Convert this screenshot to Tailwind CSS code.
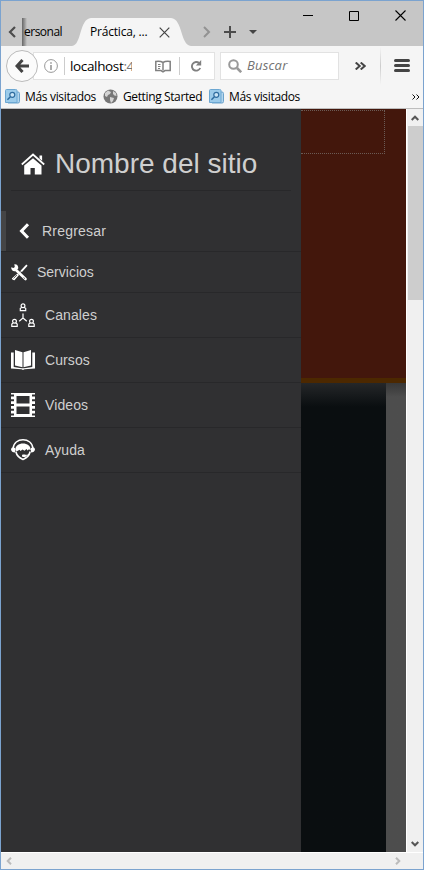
<!DOCTYPE html>
<html lang="es">
<head>
<meta charset="utf-8">
<title>Práctica</title>
<script src="https://cdn.jsdelivr.net/npm/@tailwindcss/browser@4"></script>
</head>
<body class="overflow-hidden">
<div class="flex h-[870px] w-[424px] flex-col border border-[#7ba3cf] bg-[#f5f5f5] font-['Open_Sans',sans-serif] text-[12px] text-black">

  <!-- Title bar and tabs -->
  <header class="relative flex h-[45px] shrink-0 items-end bg-[#c6c6c6]">
    <div class="flex h-[28px] w-[21px] items-center pl-[7px]">
      <svg class="h-3 w-2" viewBox="0 0 8 12" fill="none" stroke="#4c4c4c" stroke-width="2.2"><path d="M7 1 2 6l5 5"/></svg>
    </div>
    <div class="flex h-[28px] w-[50px] items-center overflow-hidden bg-linear-to-r from-[#666] via-[#c6c6c6] via-10% to-[#c6c6c6] whitespace-nowrap"><span class="ml-[2px] tracking-[-0.5px]">ersonal</span></div>
    <div class="relative flex h-[28px] w-[120px] items-center">
      <svg class="absolute inset-0" width="120" height="28" viewBox="0 0 120 28"><path d="M0 28C10 27 7 1 19 0H99C111 1 108 27 119 28Z" fill="#f5f5f5"/></svg>
      <span class="relative ml-[18px] w-[59px] whitespace-nowrap tracking-[-0.2px]">Práctica, ...</span>
      <svg class="relative ml-[10px]" width="11" height="11" viewBox="0 0 11 11" stroke="#444" stroke-width="1.2"><path d="m.7.7 9.6 9.6M10.3.7.7 10.3"/></svg>
    </div>
    <div class="flex h-[28px] items-center pl-[11px]">
      <svg width="8" height="12" viewBox="0 0 8 12" fill="none" stroke="#929292" stroke-width="2"><path d="m1 1 5 5-5 5"/></svg>
      <svg class="ml-[13px]" width="12" height="12" viewBox="0 0 12 12" stroke="#4c4c4c" stroke-width="2"><path d="M6 0v12M0 6h12"/></svg>
      <svg class="ml-[13px]" width="8" height="4" viewBox="0 0 8 4"><path d="M0 0h8L4 4Z" fill="#444"/></svg>
    </div>
    <div class="absolute top-[9px] right-[17px] flex items-center gap-[36px]">
      <svg width="10" height="11" viewBox="0 0 10 11"><path d="M0 5h10v1H0z"/></svg>
      <svg width="10" height="11" viewBox="0 0 10 11" fill="none" stroke="#000"><path d="M.5 1.500h9v9h-9z"/></svg>
      <svg width="11" height="11" viewBox="0 0 11 11" stroke="#000" stroke-width="1.1"><path d="m.5.5 10 10M10.500.5l-10 10"/></svg>
    </div>
  </header>

  <!-- Navigation toolbar -->
  <div class="relative flex h-[40px] shrink-0 items-center">
    <div class="z-10 ml-[5px] flex size-[32px] items-center justify-center rounded-full border border-[#bbb] bg-[#fbfbfb]">
      <svg width="14" height="14" viewBox="0 0 14 14" fill="none" stroke="#444" stroke-width="3"><path d="M7.500 1 2 7l5.500 6M2.500 7H14"/></svg>
    </div>
    <div class="-ml-[5px] flex h-[28px] w-[182px] items-center border border-[#e2e2e2] bg-white pl-[10px]">
      <svg class="shrink-0" width="14" height="14" viewBox="0 0 14 14"><circle cx="7" cy="7" r="6.400" fill="none" stroke="#999" stroke-width="1"/><path d="M6.300 6h1.400v5H6.300zM6.300 3.200h1.400v1.500H6.300z" fill="#888"/></svg>
      <div class="ml-[6px] h-[18px] w-px bg-[#ccc]"></div>
      <div class="ml-[5px] w-[62px] overflow-hidden whitespace-nowrap text-[13.5px] leading-[20px] tracking-[-0.35px]">localhost<span class="text-[#777]">:4</span></div>
      <svg class="ml-[23px]" width="16" height="13" viewBox="0 0 16 13" fill="none" stroke="#808080" stroke-width="1.500"><path d="M8 2.500C6 1.200 3 1.200 .8 1.500v9H6l2 1.300 2-1.300h5.200v-9C13 1.200 10 1.200 8 2.500"/><path d="M8 2.500v8"/><path d="M3 4.500h2.500M3 6.500h2.500M3 8.500h2" stroke-width="1"/></svg>
      <div class="ml-[8px] h-[18px] w-px bg-[#ccc]"></div>
      <svg class="ml-[10px]" width="12" height="12" viewBox="0 0 12 12"><path d="M9.200 3.200A4.300 4.300 0 1 0 10.200 8" fill="none" stroke="#808080" stroke-width="1.900"/><path d="M11.200 0v5.500H5.800Z" fill="#808080"/></svg>
    </div>
    <div class="ml-[5px] flex h-[28px] w-[119px] items-center border border-[#e2e2e2] bg-white pl-[7px] text-[#737373]">
      <svg width="14" height="14" viewBox="0 0 14 14" fill="none" stroke="#999"><circle cx="5.500" cy="5.500" r="4.300" stroke-width="2"/><path d="m9 9 4.200 4.200" stroke-width="2.600"/></svg>
      <span class="ml-[5px] text-[13px] italic tracking-[0.2px]">Buscar</span>
    </div>
    <svg class="ml-[16px]" width="11" height="8" viewBox="0 0 11 8" fill="none" stroke="#444" stroke-width="2"><path d="m.7.5 4 3.500-4 3.500M5.700.5l4 3.500-4 3.500"/></svg>
    <div class="ml-[14px] h-[38px] w-px bg-linear-to-b from-[#f5f5f5] via-[#ccc] to-[#f5f5f5]"></div>
    <div class="ml-[13px] flex w-[16px] -translate-y-px flex-col gap-[2px]"><i class="h-[3px] rounded-full bg-[#444]"></i><i class="h-[3px] rounded-full bg-[#444]"></i><i class="h-[3px] rounded-full bg-[#444]"></i></div>
  </div>

  <!-- Bookmarks -->
  <nav class="flex h-[23px] shrink-0 items-center border-b border-[#bdbdbd] pl-[4px] whitespace-nowrap">
    <svg class="shrink-0 -translate-y-px" width="15" height="16" viewBox="0 0 15 16"><path d="M9 4h4q1.500 0 1.500 1.500v8q0 1.500-1.500 1.500H3" fill="#b4d6ee" stroke="#6ca3cc"/><path d="M.5 2.500q0-1 1-1h9q1.500 0 1.500 1v12H.5Z" fill="#9ccbea" stroke="#6ca7d2"/><circle cx="7.300" cy="6.800" r="2.500" fill="#cbe5f6" stroke="#2f6c9f" stroke-width="1.200"/><path d="m5.400 8.700-3 3" stroke="#2f6c9f" stroke-width="1.500"/></svg>
    <span class="ml-[5px] w-[73px] tracking-[-0.33px]">Más visitados</span>
    <svg class="ml-[5px] shrink-0 -translate-y-px" width="15" height="15" viewBox="0 0 15 15"><circle cx="7.500" cy="7.500" r="7" fill="#777"/><path d="M2 4 5 1.500 8 3 7 5 5 6 4 8 2 7ZM7 8l4 1-1 3-2 2-1-3ZM10 2l3 2 .5 3-2-.5L10 5Z" fill="#d4d4d4"/></svg>
    <span class="ml-[5px] w-[81px] tracking-[-0.38px]">Getting Started</span>
    <svg class="ml-[5px] shrink-0 -translate-y-px" width="15" height="16" viewBox="0 0 15 16"><path d="M9 4h4q1.500 0 1.500 1.500v8q0 1.500-1.500 1.500H3" fill="#b4d6ee" stroke="#6ca3cc"/><path d="M.5 2.500q0-1 1-1h9q1.500 0 1.500 1v12H.5Z" fill="#9ccbea" stroke="#6ca7d2"/><circle cx="7.300" cy="6.800" r="2.500" fill="#cbe5f6" stroke="#2f6c9f" stroke-width="1.200"/><path d="m5.400 8.700-3 3" stroke="#2f6c9f" stroke-width="1.500"/></svg>
    <span class="ml-[5px] tracking-[-0.33px]">Más visitados</span>
    <svg class="mr-[3px] ml-auto" width="8" height="6" viewBox="0 0 8 6" fill="none" stroke="#111"><path d="m.5.500 2.500 2.500L.5 5.500M4.500.5 7 3 4.500 5.500"/></svg>
  </nav>

  <!-- Viewport -->
  <div class="flex h-[743px] shrink-0">
    <aside class="w-[300px] shrink-0 bg-[#303032] font-['Liberation_Sans',sans-serif] text-[14px] text-[#cfcfcf]">
      <div class="mx-[10px] flex h-[82px] items-end border-b border-[#28282a] pb-[10px] pl-[10px]">
        <svg class="mb-[5px]" width="24" height="22" viewBox="0 0 24 22"><path d="M12 5.200 3.200 12.500v9H9.500V15h4.300v6.500h6.700v-9Z" fill="#fff"/><path d="M.8 11.500 12 1.500l11.200 10" fill="none" stroke="#fff" stroke-width="1.700"/><path d="M18.500 2.500h2.600v5.200l-2.600-2.300Z" fill="#fff"/></svg>
        <h1 class="ml-[10px] text-[28px] leading-[32px] whitespace-nowrap">Nombre del sitio</h1>
      </div>
      <ul class="mt-[20px]">
        <li class="flex h-[41px] items-center border-b border-[#28282a]"><span class="h-[40px] w-[5px] bg-[#454546]"></span><svg class="ml-[13px]" width="11" height="16" viewBox="0 0 11 16" fill="none" stroke="#fff" stroke-width="3"><path d="M9 1.200 2.500 8 9 14.800"/></svg><span class="ml-[12px] tracking-[0.2px]">Rregresar</span></li>
        <li class="flex h-[41px] items-center border-b border-[#28282a] pl-[10px]"><svg width="17" height="17" viewBox="0 0 17 17"><path d="M4.500 5.500 14.500 15" stroke="#fff" stroke-width="2.600" stroke-linecap="round"/><path d="M3.300.3 3.800 3 2.500 4.100.2 3.200C0 6 2 7.800 4.700 7L7.200 4.600C7.700 2 6 0 3.300.3Z" fill="#fff"/><path d="M15.300 .4 16.600 1.700 11 8 9.500 6.700ZM6.500 9.500 8 11 3.500 16.300Q1.500 16.500.8 14.500Z" fill="#fff"/><path d="m7 10.500 4-4" stroke="#fff" stroke-width="1"/><path d="m2.500 14.500 3.500-3.500M12.500 13.500l1.500 1.200" stroke="#303032" stroke-width=".7"/></svg><span class="ml-[9px]">Servicios</span></li>
        <li class="flex h-[45px] items-center border-b border-[#28282a] pl-[10px]"><svg width="24" height="24" viewBox="0 0 24 24" fill="none" stroke="#fff" stroke-width="1.200"><path d="M12 10.500v4.500L8.200 18.300M12 15l3.800 3.300"/><circle cx="12" cy="2.700" r="1.900"/><path d="M10.800 4.500 9.300 5.300V7.700h5.400V5.300L13.200 4.500"/><circle cx="3.500" cy="18.300" r="1.900"/><path d="M2.300 20 .8 21v2.400h5.400V21L4.700 20"/><circle cx="20.500" cy="18.300" r="1.900"/><path d="m19.300 20-1.500 1v2.400h5.400V21l-1.500-1"/></svg><span class="ml-[10px] tracking-[0.1px]">Canales</span></li>
        <li class="flex h-[45px] items-center border-b border-[#28282a] pl-[10px]"><svg width="24" height="20" viewBox="0 0 24 20" fill="#fff"><path d="M4 0 11.500 2.300V17.200L4 15.500ZM20 0 12.500 2.300V17.200L20 15.500ZM0 2.500H2.700V17l8 1.300h2.600l8-1.300V2.500H24V18.500L13.500 19.200 12 20l-1.500-.8L0 18.500Z"/></svg><span class="ml-[10px] tracking-[0.1px]">Cursos</span></li>
        <li class="flex h-[45px] items-center border-b border-[#28282a] pl-[10px]"><svg width="24" height="24" viewBox="0 0 24 24"><path d="M0 0h24v24H0Z" fill="#fff"/><path d="M5.500 3h13v7.500h-13ZM5.500 13.500h13V21h-13ZM0 1.500h3v2H0ZM0 6.200h3v2H0ZM0 11h3v2H0ZM0 15.800h3v2H0ZM0 20.500h3v2H0ZM21 1.500h3v2h-3ZM21 6.200h3v2h-3ZM21 11h3v2h-3ZM21 15.800h3v2h-3ZM21 20.500h3v2h-3Z" fill="#303032"/></svg><span class="ml-[10px] tracking-[0.1px]">Videos</span></li>
        <li class="flex h-[45px] items-center border-b border-[#28282a] pl-[10px]"><svg width="24" height="22" viewBox="0 0 24 22"><path d="M2 10C2.500-2.400 21.500-2.400 22 10" fill="none" stroke="#fff" stroke-width="1.400"/><path d="M4.300 11.500C3.500 2 20.500 2 19.700 11.500L18 10.300 16.500 11.500 15.500 10 13.500 11.700 11.500 10.500 9.500 12 8.500 10.700 6 12.300Z" fill="#fff"/><path d="M0 10.500Q0 8.500 2 8.200L4 9v4.500Q.5 13.500 0 10.500ZM24 10.500Q24 8.500 22 8.200L20 9v4.500Q23.500 13.500 24 10.500Z" fill="#fff"/><path d="M4.800 12.500Q6 18 12 20.500 18 18 19.200 12.500" fill="none" stroke="#fff" stroke-width="1.600"/><path d="M18.500 14.500q-1.500 2-4 2" fill="none" stroke="#fff"/><rect x="11" y="15.500" width="4" height="2.400" rx="1" fill="#fff"/></svg><span class="ml-[10px] tracking-[0.1px]">Ayuda</span></li>
      </ul>
    </aside>

    <main class="flex w-[105px] flex-col">
      <div class="h-[274px] shrink-0 border-b-[5px] border-[#4c2800] bg-[#43170c] pt-px">
        <div class="h-[44px] w-[84px] border border-l-0 border-dotted border-[#6b5b55]"></div>
      </div>
      <div class="flex flex-1">
        <div class="w-[85px] bg-linear-to-b from-[#252729] to-[#0a0e10] to-[24px]"></div>
        <div class="flex-1 bg-linear-to-b from-[#373737] to-[#4d4d4d] to-[14px]"></div>
      </div>
    </main>

    <!-- Vertical scrollbar -->
    <div class="flex w-[17px] flex-col items-center border-l border-white bg-[#f0f0f0]">
      <div class="flex h-[17px] items-center"><svg width="8" height="6" viewBox="0 0 8 6" fill="none" stroke="#555" stroke-width="2"><path d="m.7 5 3.300-3.300L7.300 5"/></svg></div>
      <div class="h-[174px] w-[15px] bg-[#cdcdcd]"></div>
      <div class="mt-auto flex h-[17px] items-center"><svg width="8" height="6" viewBox="0 0 8 6" fill="none" stroke="#555" stroke-width="2"><path d="M.7 1 4 4.300 7.300 1"/></svg></div>
    </div>
  </div>

  <!-- Horizontal scrollbar -->
  <div class="flex flex-1 items-center border-t border-white bg-[#f0f0f0] pl-[5px]">
    <svg width="6" height="8" viewBox="0 0 6 8" fill="none" stroke="#bbb" stroke-width="2"><path d="M5 .7 1.700 4 5 7.300"/></svg>
    <svg class="mr-[22px] ml-auto" width="6" height="8" viewBox="0 0 6 8" fill="none" stroke="#bbb" stroke-width="2"><path d="M1 .7 4.300 4 1 7.300"/></svg>
  </div>
</div>
</body>
</html>
